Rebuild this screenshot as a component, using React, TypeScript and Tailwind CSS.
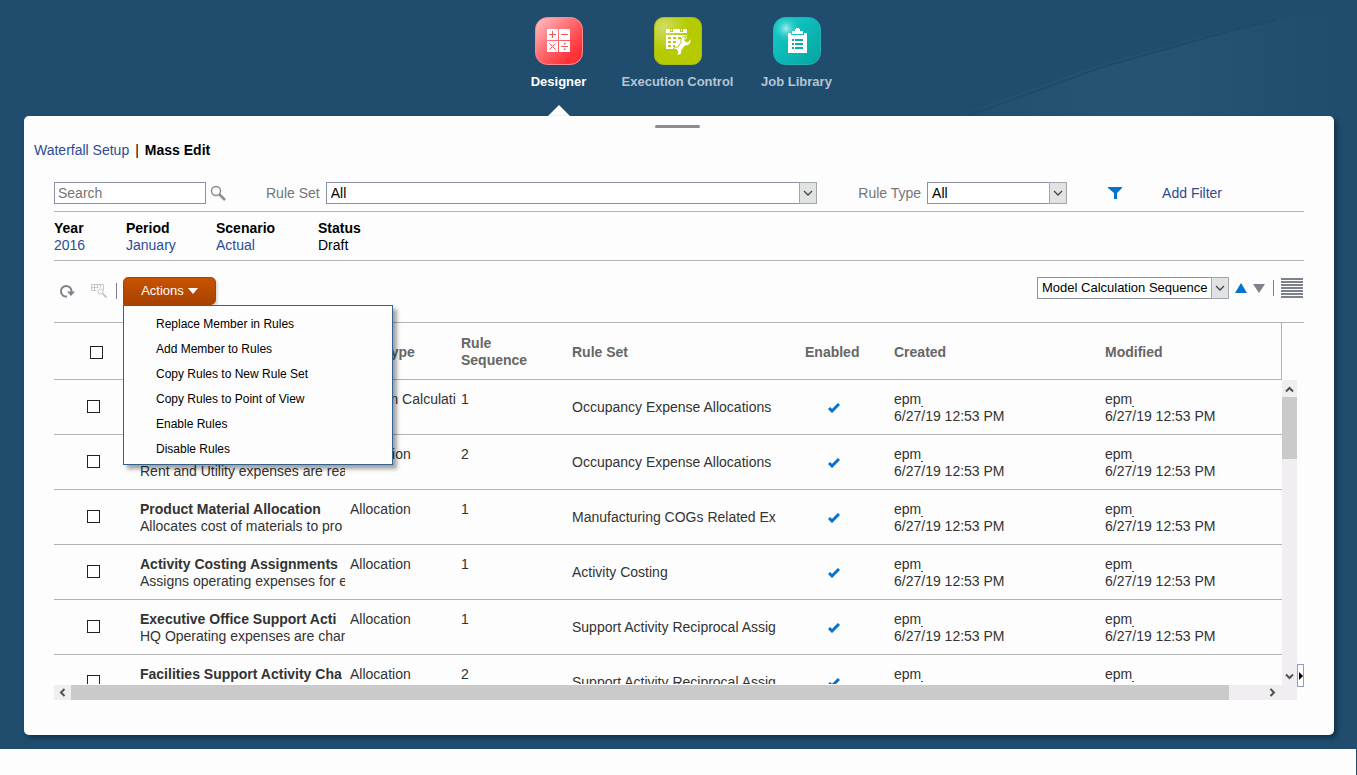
import { useState } from "react";
import type { ReactNode } from "react";

type Rule = {
  name: string;
  description: string;
  type: string;
  sequence: number;
  ruleSet: string;
};

const STAMP = "6/27/19 12:53 PM";

const RULES: Rule[] = [
  { name: "Rent Expense", description: "Rent calculation", type: "Custom Calculati", sequence: 1, ruleSet: "Occupancy Expense Allocations" },
  { name: "Utilities Expense", description: "Rent and Utility expenses are rea", type: "Allocation", sequence: 2, ruleSet: "Occupancy Expense Allocations" },
  { name: "Product Material Allocation", description: "Allocates cost of materials to pro", type: "Allocation", sequence: 1, ruleSet: "Manufacturing COGs Related Ex" },
  { name: "Activity Costing Assignments", description: "Assigns operating expenses for e", type: "Allocation", sequence: 1, ruleSet: "Activity Costing" },
  { name: "Executive Office Support Acti", description: "HQ Operating expenses are char", type: "Allocation", sequence: 1, ruleSet: "Support Activity Reciprocal Assig" },
  { name: "Facilities Support Activity Cha", description: "Facilities expenses are charged", type: "Allocation", sequence: 2, ruleSet: "Support Activity Reciprocal Assig" },
];

const ACTIONS = [
  "Replace Member in Rules",
  "Add Member to Rules",
  "Copy Rules to New Rule Set",
  "Copy Rules to Point of View",
  "Enable Rules",
  "Disable Rules",
];

const POV = [
  { label: "Year", value: "2016", width: "w-[72px]", link: true },
  { label: "Period", value: "January", width: "w-[90px]", link: true },
  { label: "Scenario", value: "Actual", width: "w-[102px]", link: true },
  { label: "Status", value: "Draft", width: "w-[80px]", link: false },
];

function DesignerIcon() {
  return (
    <svg width="48" height="48" viewBox="0 0 48 48">
      <defs>
        <linearGradient id="red" x1="0" y1="0" x2="1" y2="1">
          <stop offset="0.1" stopColor="#ffb0b4" />
          <stop offset="0.45" stopColor="#ff6b70" />
          <stop offset="0.8" stopColor="#ff3238" />
        </linearGradient>
      </defs>
      <rect x="0.5" y="0.5" width="47" height="47" rx="12" fill="url(#red)" stroke="#ff8b90" />
      <path fill="#fff" d="M12 12h11v11H12zM24 12h11v11H24zM12 24h11v11H12zM24 24h11v11H24z" />
      <path stroke="#f4585e" strokeWidth="1" fill="none" d="M14 17.500h7M17.500 14v7M26 17.500h7M14.500 26.500l6 6M20.500 26.500l-6 6M26 29.500h7" />
      <path fill="#f4585e" d="M29 26h1.500v1.500H29zM29 31.500h1.500V33H29z" />
    </svg>
  );
}

function ExecutionIcon() {
  return (
    <svg width="48" height="48" viewBox="0 0 48 48">
      <defs>
        <radialGradient id="lime" cx="0.2" cy="0.2" r="0.5">
          <stop offset="0" stopColor="#d0dd62" />
          <stop offset="1" stopColor="#b5cb00" />
        </radialGradient>
      </defs>
      <rect x="0.5" y="0.5" width="47" height="47" rx="9" fill="url(#lime)" stroke="#a9bd1a" />
      <path fill="#fff" d="M12 12h21v4H12zM12 18h21v3L22 32H12z" />
      <path fill="#b9cc20" d="M16 11h1v3h1v-3h1v4h-3zM26 11h1v3h1v-3h1v4h-3z" />
      <path
        fill="#b5c820"
        d="M14 20h3v2h-3zM19 20h3v2h-3zM24 20h3v2h-3zM14 24h3v2h-3zM19 24h3v2h-3zM14 28h3v2h-3zM19 28h2v2h-2z"
      />
      <path
        fill="#fff"
        stroke="#b5cb00"
        strokeWidth="1"
        d="M19 32c1.500-2 3-2 4.500-1.700l3.500-4.800c-.8-3.500 1.500-6.500 5.500-6.300l-2 3.300 1 2 2.500.3 2.500-3.500c2 4.500-2 8-5.500 7.700l-3.500 4.500c.8 3.500-1.500 5-5 4.500l1.500-3-1.500-2.500z"
      />
    </svg>
  );
}

function LibraryIcon() {
  return (
    <svg width="48" height="48" viewBox="0 0 48 48">
      <defs>
        <linearGradient id="teal" x1="0" y1="0" x2="1" y2="1">
          <stop offset="0.2" stopColor="#12c6c2" />
          <stop offset="1" stopColor="#04a39f" />
        </linearGradient>
        <radialGradient id="shine" cx="0.27" cy="0.24" r="0.28">
          <stop offset="0" stopColor="#a5efed" />
          <stop offset="1" stopColor="#12c6c2" stopOpacity="0" />
        </radialGradient>
      </defs>
      <rect x="0.5" y="0.5" width="47" height="47" rx="12" fill="url(#teal)" stroke="#24b3b3" />
      <rect width="48" height="48" rx="12" fill="url(#shine)" />
      <path fill="#fff" d="M15 16h3v2h13v-2h3v20H15zM19 14h3v-2h1v-1h3v1h1v2h3v3H19z" />
      <path fill="#0aaeaa" d="M19 22h2v2h-2zM22 22h8v2h-8zM19 26h2v2h-2zM22 26h8v2h-8zM19 30h2v2h-2zM22 30h8v2h-8z" />
    </svg>
  );
}

const TABS = [
  { label: "Designer", icon: <DesignerIcon />, active: true },
  { label: "Execution Control", icon: <ExecutionIcon />, active: false },
  { label: "Job Library", icon: <LibraryIcon />, active: false },
];

function Chevron({ direction }: { direction: "up" | "down" | "left" | "right" }) {
  const paths = {
    up: "M1 7.500 4.500 4 8 7.500",
    down: "M1 2.500 4.500 6 8 2.500",
    left: "M6.500 1 3 4.500 6.500 8",
    right: "M2.500 1 6 4.500 2.500 8",
  };
  return (
    <svg width="9" height="9" viewBox="0 0 9 9" fill="none" stroke="#505050" strokeWidth="2">
      <path d={paths[direction]} />
    </svg>
  );
}

function Select({ id, label, className, children }: { id: string; label?: string; className: string; children: ReactNode }) {
  return (
    <div className={`relative h-[22px] ${className}`}>
      <select
        id={id}
        aria-label={label}
        className="block h-full w-full appearance-none border border-[#8b8fa3] bg-white pr-5 pl-1 text-black outline-none"
      >
        {children}
      </select>
      <span className="pointer-events-none absolute inset-y-0 right-0 flex w-[18px] items-center justify-center border border-[#a3a6ad] bg-[#e1e3e2]">
        <svg width="10" height="6" viewBox="0 0 10 6" fill="none" stroke="#444" strokeWidth="1.300">
          <path d="M1 1l4 4 4-4" />
        </svg>
      </span>
    </div>
  );
}

function Checkbox({ label }: { label: string }) {
  return (
    <input
      type="checkbox"
      aria-label={label}
      className="block h-[13px] w-[13px] appearance-none border border-[#222] bg-white checked:bg-[#0572ce]"
    />
  );
}

function Stamp() {
  return (
    <>
      <div className="flex items-end">
        epm
        <span className="mb-px h-px w-[2px] bg-[#555]" />
      </div>
      <div>{STAMP}</div>
    </>
  );
}

function ActionsMenu() {
  const [open, setOpen] = useState(true);
  return (
    <div className="relative ml-[6px]">
      <button
        onClick={() => setOpen(!open)}
        className="flex h-7 w-[93px] items-center justify-center gap-1 rounded-t-[5px] rounded-br-[5px] border border-[#a84400] bg-linear-to-b from-[#c85200] to-[#a84300] text-[13px] text-white shadow-[2px_2px_2px_#d8dcda]"
      >
        Actions
        <svg width="10" height="6" viewBox="0 0 10 6" fill="#fff">
          <path d="M0 0h10L5 6z" />
        </svg>
      </button>
      {open && (
        <ul className="absolute top-7 left-0 z-10 w-[270px] border border-[#33628f] bg-[#fdfdfd] pt-[5px] pb-[3px] shadow-[4px_4px_4px_#0000005c]">
          {ACTIONS.map((a) => (
            <li key={a}>
              <button className="block h-[25px] w-full pl-8 text-left text-xs text-black hover:bg-[#e4f0fa]">{a}</button>
            </li>
          ))}
        </ul>
      )}
    </div>
  );
}

function Toolbar() {
  return (
    <div className="flex items-start border-b border-[#b4b4b4] pt-4 pb-[17px]">
      <div className="flex h-7 items-center">
        <button aria-label="Refresh" className="ml-1">
          <svg width="18" height="16" viewBox="0 0 18 16" fill="none">
            <path d="M9 13.500a5.300 5.300 0 1 1 4.500-5.500v1" stroke="#7d818c" strokeWidth="2" />
            <path d="M9 8.500h8L13 13z" fill="#7d818c" />
          </svg>
        </button>
        <button aria-label="View rules" className="ml-[14px]">
          <svg width="18" height="16" viewBox="0 0 18 16" fill="none" stroke="#c6c6c6">
            <path d="M1.500 1.500h12v6M1.500 1.500v6h5M4.500 1.500v6M7.500 1.500v4M10.500 1.500v3M1.500 4.500h7" />
            <circle cx="10.500" cy="8.500" r="2.500" fill="#fff" />
            <path d="M12.500 10.500l4 4" strokeWidth="2" />
          </svg>
        </button>
        <span className="ml-2 h-4 w-px bg-[#7d818c]" />
        <ActionsMenu />
      </div>
      <div className="ml-auto flex h-[22px] items-center pr-px">
        <Select id="sort" label="Sort by" className="w-[192px] text-[13px]">
          <option>Model Calculation Sequence</option>
        </Select>
        <button aria-label="Sort ascending" className="ml-[6px]">
          <svg width="12" height="10" viewBox="0 0 12 10" fill="#0572ce">
            <path d="M0 10 6 0l6 10z" />
          </svg>
        </button>
        <button aria-label="Sort descending" className="ml-[6px]">
          <svg width="12" height="9" viewBox="0 0 12 9" fill="#7d818c">
            <path d="M0 0h12L6 9z" />
          </svg>
        </button>
        <span className="ml-2 h-4 w-px bg-[#7d818c]" />
        <button aria-label="List view" className="ml-[7px]">
          <svg width="22" height="20" viewBox="0 0 22 20" fill="#7d818c">
            <path d="M0 0h22v2H0zM0 3h22v2H0zM0 6h22v2H0zM0 9h22v2H0zM0 12h22v2H0zM0 15h22v2H0zM0 18h22v2H0z" />
          </svg>
        </button>
      </div>
    </div>
  );
}

function RulesTable() {
  return (
    <table className="w-full table-fixed border-separate border-spacing-0 text-left leading-[17px] text-[#333]">
      <colgroup>
        <col className="w-[86px]" />
        <col className="w-[209px]" />
        <col className="w-[112px]" />
        <col className="w-[111px]" />
        <col className="w-[233px]" />
        <col className="w-[89px]" />
        <col className="w-[211px]" />
        <col />
      </colgroup>
      <thead>
        <tr className="h-[57px] text-[#666] [&>th]:border-b [&>th]:border-[#b4b4b4] [&>th]:pt-[2px]">
          <th className="pl-9">
            <Checkbox label="Select all rules" />
          </th>
          <th>Name</th>
          <th>Rule Type</th>
          <th>
            Rule
            <br />
            Sequence
          </th>
          <th>Rule Set</th>
          <th>Enabled</th>
          <th>Created</th>
          <th className="border-r">Modified</th>
        </tr>
      </thead>
      <tbody>
        {RULES.map((r) => (
          <tr key={r.name} className="h-[55px] [&>td]:border-b [&>td]:border-[#b4b4b4]">
            <td className="pb-[2px] pl-[33px]">
              <Checkbox label={r.name} />
            </td>
            <td className="pt-[2px] pr-1 whitespace-nowrap">
              <div className="overflow-hidden font-bold">{r.name}</div>
              <div className="overflow-hidden">{r.description}</div>
            </td>
            <td className="pt-[11px] pr-1 pl-px align-top whitespace-nowrap">
              <div className="overflow-hidden">{r.type}</div>
            </td>
            <td className="pt-[11px] align-top">{r.sequence}</td>
            <td className="whitespace-nowrap">{r.ruleSet}</td>
            <td className="pt-[2px] pl-[23px]">
              <svg width="12" height="10" viewBox="0 0 12 10" fill="none" stroke="#0572ce" strokeWidth="3">
                <path d="M1 5l3 3 7-7" />
              </svg>
            </td>
            <td className="pt-[2px]">
              <Stamp />
            </td>
            <td className="pt-[2px]">
              <Stamp />
            </td>
          </tr>
        ))}
      </tbody>
    </table>
  );
}

export default function App() {
  return (
    <div className="bg-[#fdfdfd] font-['Liberation_Sans',Arial,sans-serif] text-sm">
      <div className="relative bg-[#204c6d] pr-[23px] pb-[14px] pl-6">
        <svg className="absolute top-0 right-0" width="420" height="116" viewBox="0 0 420 116">
          <defs>
            <linearGradient id="beam" x1="0" x2="1">
              <stop offset="0" stopColor="#224f70" />
              <stop offset="0.35" stopColor="#265273" />
              <stop offset="0.6" stopColor="#265273" />
              <stop offset="1" stopColor="#204c6d" />
            </linearGradient>
          </defs>
          <path d="M20 116 160 66 300 27 400 8V116z" fill="url(#beam)" />
          <path d="M30 116 165 67 300 29 340 20" stroke="#1f4a6a" strokeWidth="2" fill="none" />
        </svg>

        <nav className="relative flex h-[116px] justify-center pt-[17px] pr-[3px]">
          {TABS.map((t) => (
            <a
              key={t.label}
              href="#"
              className={`flex w-[119px] flex-col items-center text-[13px] font-bold ${t.active ? "text-white" : "text-[#b3c6d4]"}`}
            >
              {t.icon}
              <span className="mt-[9px] leading-4 whitespace-nowrap">{t.label}</span>
              {t.active && (
                <svg className="mt-auto" width="22" height="11" viewBox="0 0 22 11" fill="#fdfdfd">
                  <path d="M0 11 11 0l11 11z" />
                </svg>
              )}
            </a>
          ))}
        </nav>

        <main className="relative rounded-[5px] bg-[#fdfdfd] px-[30px] pt-[9px] pb-[35px] shadow-[3px_3px_4px_#12344d]">
          <div className="flex justify-center pr-[3px]">
            <div className="h-[3px] w-[45px] rounded-full bg-[#8a8c92]" />
          </div>
          <div className="-ml-5 mt-[14px] flex gap-[6px] leading-[17px]">
            <a href="#" className="text-[#2f4b93]">Waterfall Setup</a>
            <span>|</span>
            <b>Mass Edit</b>
          </div>

          <div className="mt-[23px] flex items-center border-b border-[#b4b4b4] pr-[82px] pb-[7px]">
            <input
              aria-label="Search"
              placeholder="Search"
              className="h-[22px] w-[152px] border border-[#8b8fa3] bg-white px-[3px] outline-none placeholder:text-[#757575]"
            />
            <button aria-label="Run search" className="ml-1">
              <svg width="17" height="16" viewBox="0 0 17 16" fill="none" stroke="#8a8c92">
                <circle cx="6" cy="6" r="4.500" strokeWidth="1.500" />
                <path d="M9.500 9.500l5.500 5.500" strokeWidth="2.500" />
              </svg>
            </button>
            <label htmlFor="rule-set" className="mr-[6px] ml-[39px] text-[#757575]">Rule Set</label>
            <Select id="rule-set" className="flex-1">
              <option>All</option>
            </Select>
            <label htmlFor="rule-type" className="mr-[6px] ml-[41px] text-[#757575]">Rule Type</label>
            <Select id="rule-type" className="w-[140px]">
              <option>All</option>
            </Select>
            <button aria-label="Filter" className="ml-[41px]">
              <svg width="14" height="12" viewBox="0 0 14 12" fill="#0572ce">
                <path d="M0 0h14v1L9 6v6H6V6L0 1z" />
              </svg>
            </button>
            <a href="#" className="ml-10 text-[#2f4b93]">Add Filter</a>
          </div>

          <dl className="flex border-b border-[#b4b4b4] pt-2 pb-[6px] leading-[17px]">
            {POV.map((p) => (
              <div key={p.label} className={p.width}>
                <dt className="font-bold">{p.label}</dt>
                <dd>{p.link ? <a href="#" className="text-[#2f4b93]">{p.value}</a> : p.value}</dd>
              </div>
            ))}
          </dl>

          <Toolbar />

          <div className="flex">
            <div className="min-w-0 flex-1">
              <div className="flex h-[362px]">
                <div className="mb-px min-w-0 flex-1 overflow-hidden">
                  <RulesTable />
                </div>
                <div className="mt-[57px] flex w-[15px] flex-col items-center bg-[#f0eef0]">
                  <span className="flex h-[17px] items-center">
                    <Chevron direction="up" />
                  </span>
                  <span className="h-[62px] w-full bg-[#cacaca]" />
                  <span className="mt-auto mb-1">
                    <Chevron direction="down" />
                  </span>
                </div>
              </div>
              <div className="flex h-[15px] items-center bg-[#f0eef0]">
                <span className="flex w-[17px] justify-center">
                  <Chevron direction="left" />
                </span>
                <span className="h-full flex-1 bg-[#cacaca]" />
                <span className="flex w-[68px] justify-end pr-5">
                  <Chevron direction="right" />
                </span>
              </div>
            </div>
            <button
              aria-label="Expand panel"
              className="mb-[13px] flex h-[23px] w-[7px] items-center justify-center self-end border border-[#8aa0b8] bg-white"
            >
              <svg width="4" height="8" viewBox="0 0 4 8" fill="#000">
                <path d="M0 0l4 4-4 4z" />
              </svg>
            </button>
          </div>
        </main>
      </div>
      <div className="h-[26px] border-r border-[#204c6d]" />
    </div>
  );
}
